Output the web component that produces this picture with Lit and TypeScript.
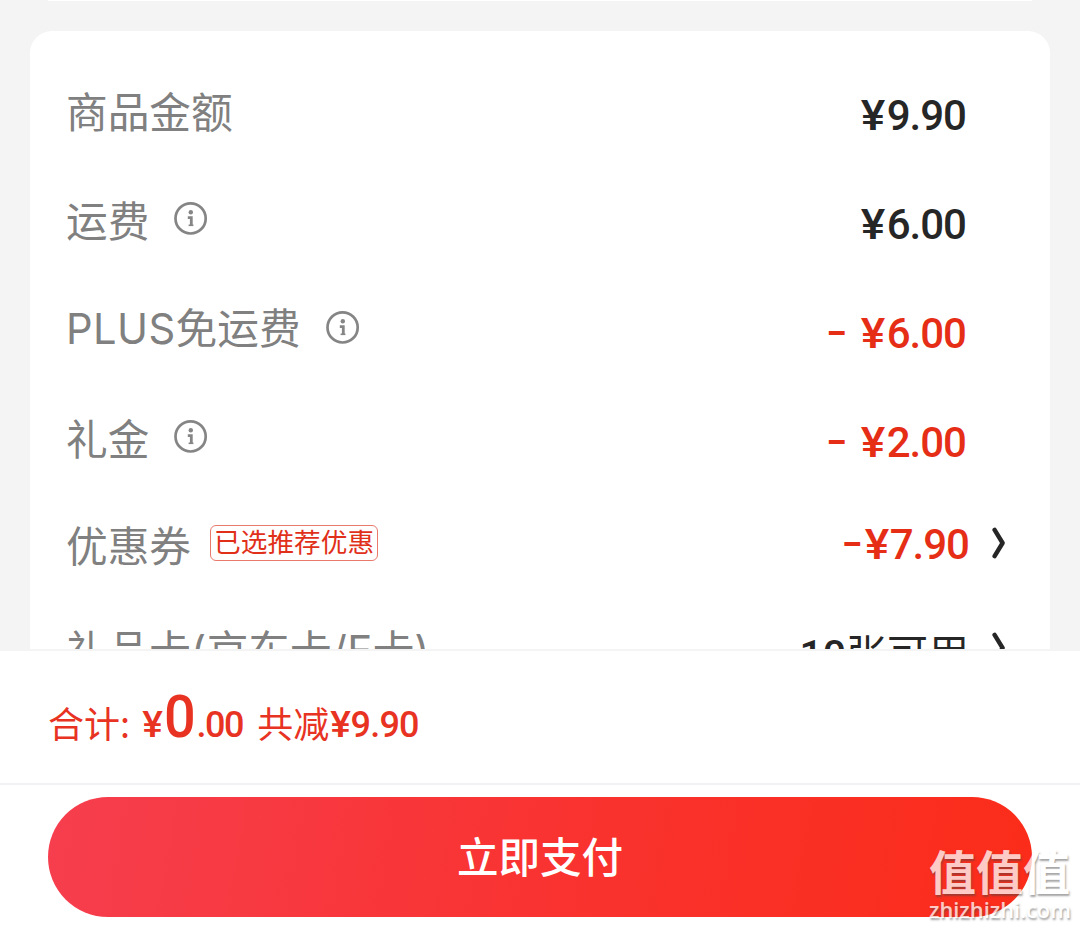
import { LitElement, html, css } from 'lit';
import { customElement, property, state } from 'lit/decorators.js';

interface PriceRow {
  label: string;
  value: string;
  minus?: string;
  unit?: string;
  info?: boolean;
  tag?: string;
  link?: boolean;
  kind?: string;
}

@customElement('info-icon')
export class InfoIcon extends LitElement {
  static styles = css`
    :host {
      display: block;
      width: 34px;
      height: 34px;
    }

    svg {
      display: block;
    }
  `;

  render() {
    return html`
      <svg width="34" height="34" viewBox="0 0 34 34" fill="none" stroke="#858585">
        <circle cx="16.6" cy="17.4" r="15.1" stroke-width="2.7" />
        <circle cx="16.8" cy="11.2" r="2.2" fill="#858585" stroke="none" />
        <path d="M13.8 16.7h3.5v7.8" stroke-width="2.8" />
        <path d="M14.6 24.3h4.8" stroke-width="1.6" />
      </svg>
    `;
  }
}

@customElement('price-row')
export class PriceRowElement extends LitElement {
  @property({ attribute: false }) public row: PriceRow;

  static styles = css`
    :host {
      display: flex;
      align-items: center;
      height: 109px;
      padding: 0 36px;
      font-size: 41.7px;
      line-height: 60px;
      white-space: nowrap;
      box-sizing: border-box;
    }

    .label {
      padding-bottom: 4px;
      color: #808080;
    }

    .latin {
      font-family: Inter, 'Noto Sans CJK SC', sans-serif;
      letter-spacing: 0.4px;
    }

    info-icon {
      margin: -6px 0 0 25px;
    }

    .tag {
      margin: -5px 0 0 19px;
      height: 36px;
      padding: 0 3px;
      box-sizing: border-box;
      border: 1px solid #e8796b;
      border-radius: 6px;
      color: #e1301a;
      font-size: 26.7px;
      line-height: 30px;
    }

    .value {
      margin-left: auto;
      margin-right: 48px;
      padding-top: 8px;
      color: #262626;
      font-family: Roboto, 'Noto Sans CJK SC', sans-serif;
      font-size: 42px;
      font-weight: 500;
      letter-spacing: -1px;
    }

    .value.red {
      color: #e62e17;
    }

    .value.link {
      margin-right: 23px;
      padding: 0 0 2px;
    }

    .value.count {
      padding: 7px 0 0;
      font-size: 41px;
      letter-spacing: 0;
    }

    .unit {
      font-weight: 400;
    }

    .yen {
      display: inline-block;
      margin-right: 2px;
      transform: scaleX(1.1);
      transform-origin: right;
    }

    .link .yen {
      margin-right: 1px;
    }

    .minus {
      display: inline-block;
      margin-right: 5px;
      font-family: Inter, sans-serif;
      line-height: 58px;
      white-space: pre;
      transform: translateY(-2px) scaleX(1.16);
      transform-origin: right;
    }

    .arrow {
      display: block;
      margin: -6px 8px 0 0;
    }
  `;

  render() {
    const row = this.row;
    if (!row) return html``;

    return html`
      <span class="label">${this._renderLabel(row.label)}</span>
      ${row.info ? html`<info-icon></info-icon>` : ''}
      ${row.tag ? html`<span class="tag">${row.tag}</span>` : ''}
      <span class="value ${row.kind || ''} ${row.link ? 'link' : ''}"
        >${row.minus ? html`<span class="minus">${row.minus}</span>` : ''}${this._renderValue(row)}</span
      >
      ${row.link ? this._renderArrow() : ''}
    `;
  }

  _renderLabel(label: string) {
    // Latin letters and brackets are set in their own face
    return label
      .split(/([A-Z()/]+)/)
      .map(part => (/^[A-Z()/]/.test(part) ? html`<span class="latin">${part}</span>` : part));
  }

  _renderValue(row: PriceRow) {
    if (row.unit) return html`${row.value}<span class="unit">${row.unit}</span>`;
    return html`<span class="yen">¥</span>${row.value}`;
  }

  _renderArrow() {
    return html`
      <svg class="arrow" width="14" height="32" viewBox="0 0 14 32" fill="none">
        <path d="M2.6 2.8 L10.6 16 L2.6 29.2" stroke="#262626" stroke-width="4.4" stroke-linecap="round" stroke-linejoin="round" />
      </svg>
    `;
  }
}

@customElement('app-root')
export class AppRoot extends LitElement {
  @state() private _rows: PriceRow[] = [
    { label: '商品金额', value: '9.90' },
    { label: '运费', value: '6.00', info: true },
    { label: 'PLUS免运费', value: '6.00', minus: '- ', info: true, kind: 'red' },
    { label: '礼金', value: '2.00', minus: '- ', info: true, kind: 'red' },
    { label: '优惠券', value: '7.90', minus: '-', tag: '已选推荐优惠', link: true, kind: 'red' },
    { label: '礼品卡(京东卡/E卡)', value: '10', unit: '张可用', link: true, kind: 'count' },
  ];

  static styles = css`
    :host {
      display: flex;
      flex-direction: column;
      position: relative;
      width: 1080px;
      height: 929px;
      overflow: hidden;
      background: #fff;
      font-family: 'Noto Sans CJK SC', sans-serif;
    }

    .scroll {
      height: 649px;
      overflow: hidden;
      background: #f4f4f4;
    }

    .previous {
      height: 1px;
      margin: 0 48px 30px;
      background: #fff;
    }

    .card {
      margin: 0 30px;
      padding-top: 26px;
      height: 700px;
      border-radius: 22px;
      background: #fff;
    }

    .linked {
      height: 105px;
    }

    .linked:last-child {
      height: 106px;
    }

    .total {
      display: flex;
      align-items: baseline;
      height: 136px;
      padding-left: 48px;
      box-sizing: border-box;
      border-top: 2px solid #f4f4f4;
      border-bottom: 2px solid #f2f2f4;
      color: #e83323;
      font-size: 36px;
      line-height: 132px;
      white-space: nowrap;
    }

    .word {
      transform: translateY(1px);
    }

    .num {
      font-family: Roboto, sans-serif;
      font-size: 36px;
      font-weight: 500;
      letter-spacing: -0.8px;
    }

    .yen {
      margin-right: 1px;
      transform: scaleX(1.08);
    }

    .sum {
      margin-left: 13px;
    }

    .big {
      margin: 0 1px;
      font-size: 60px;
      letter-spacing: -2px;
      transform: scaleX(0.93);
    }

    .cents {
      letter-spacing: -1.4px;
    }

    .off {
      margin: 0 2px 0 14px;
    }

    .pay {
      margin: 12px 48px 0;
      height: 120px;
      flex: none;
      border: none;
      border-radius: 60px;
      background: linear-gradient(100deg, #f63e4e 0%, #f93331 50%, #fb2c19 100%);
      color: #fff;
      font-family: inherit;
      font-size: 41.5px;
      font-weight: 500;
      line-height: 114px;
      padding: 0 0 4px;
    }

    .watermark {
      position: absolute;
      left: 929px;
      top: 843px;
      display: flex;
      flex-direction: column;
      color: #fff;
      opacity: 0.75;
      text-shadow: 1px 2px 2px rgba(70, 70, 70, 0.65);
      white-space: nowrap;
    }

    .mark {
      font-size: 47px;
      font-weight: 700;
      line-height: 53px;
    }

    .site {
      font-family: 'Open Sans', sans-serif;
      font-size: 21.8px;
      font-weight: 600;
      line-height: 28px;
    }
  `;

  render() {
    return html`
      <div class="scroll">
        <div class="previous"></div>
        <div class="card">
          ${this._rows.map(row => html`<price-row class=${row.link ? 'linked' : ''} .row=${row}></price-row>`)}
        </div>
      </div>

      <div class="total">
        <span class="word">合计:</span>
        <span class="num yen sum">¥</span>
        <span class="num big">0</span>
        <span class="num cents">.00</span>
        <span class="word off">共减</span>
        <span class="num yen">¥</span>
        <span class="num">9.90</span>
      </div>

      <button class="pay">立即支付</button>

      <div class="watermark">
        <span class="mark">值值值</span>
        <span class="site">zhizhizhi.com</span>
      </div>
    `;
  }
}
